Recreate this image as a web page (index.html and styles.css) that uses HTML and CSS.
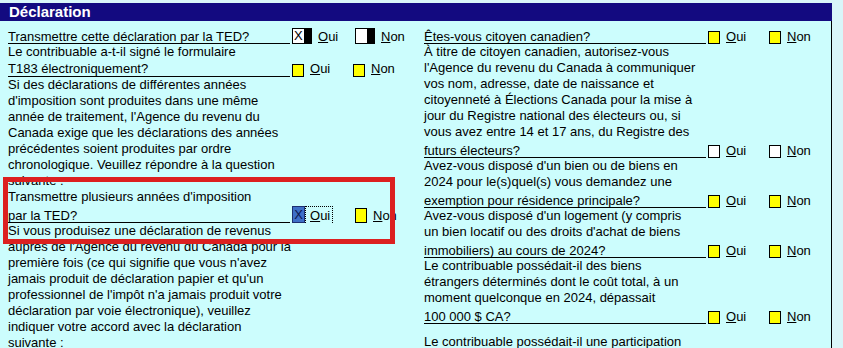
FILE: index.html
```html
<!DOCTYPE html>
<html lang="fr">
<head>
<meta charset="utf-8">
<title>Déclaration</title>
<link rel="stylesheet" href="styles.css">
</head>
<body>
<div class="window">
  <div class="title">Déclaration</div>
  <div class="panel">
    <div class="col">
      <div class="q">
        <div class="q-row">
          <span class="q-text">Transmettre cette déclaration par la TED?</span>
          <span class="opt"><span class="box box-sys">X</span><span class="lbl"><u>O</u>ui</span></span>
          <span class="opt"><span class="box box-sys box-shift"></span><span class="lbl"><u>N</u>on</span></span>
        </div>
      </div>
      <div class="q">
        <div class="q-lead">Le contribuable a-t-il signé le formulaire</div>
        <div class="q-row q-row-short">
          <span class="q-text">T183 électroniquement?</span>
          <span class="opt"><span class="box box-yellow"></span><span class="lbl"><u>O</u>ui</span></span>
          <span class="opt"><span class="box box-yellow"></span><span class="lbl"><u>N</u>on</span></span>
        </div>
      </div>
      <div class="note">Si des déclarations de différentes années<br>d'imposition sont produites dans une même<br>année de traitement, l'Agence du revenu du<br>Canada exige que les déclarations des années<br>précédentes soient produites par ordre<br>chronologique. Veuillez répondre à la question<br>suivante :</div>
      <div class="q">
        <div class="q-lead">Transmettre plusieurs années d'imposition</div>
        <div class="q-row">
          <span class="q-text">par la TED?</span>
          <span class="opt"><span class="box box-checked">X</span><span class="lbl lbl-focus"><u>O</u>ui</span></span>
          <span class="opt"><span class="box box-yellow box-tall box-shift"></span><span class="lbl"><u>N</u>on</span></span>
        </div>
      </div>
      <div class="note">Si vous produisez une déclaration de revenus<br>auprès de l'Agence du revenu du Canada pour la<br>première fois (ce qui signifie que vous n'avez<br>jamais produit de déclaration papier et qu'un<br>professionnel de l'impôt n'a jamais produit votre<br>déclaration par voie électronique), veuillez<br>indiquer votre accord avec la déclaration<br>suivante :</div>
    </div>
    <div class="col">
      <div class="q">
        <div class="q-row">
          <span class="q-text">Êtes-vous citoyen canadien?</span>
          <span class="opt"><span class="box box-yellow"></span><span class="lbl"><u>O</u>ui</span></span>
          <span class="opt"><span class="box box-yellow"></span><span class="lbl"><u>N</u>on</span></span>
        </div>
      </div>
      <div class="q">
        <div class="q-lead">À titre de citoyen canadien, autorisez-vous<br>l'Agence du revenu du Canada à communiquer<br>vos nom, adresse, date de naissance et<br>citoyenneté à Élections Canada pour la mise à<br>jour du Registre national des électeurs ou, si<br>vous avez entre 14 et 17 ans, du Registre des</div>
        <div class="q-row">
          <span class="q-text">futurs électeurs?</span>
          <span class="opt"><span class="box box-white"></span><span class="lbl"><u>O</u>ui</span></span>
          <span class="opt"><span class="box box-white"></span><span class="lbl"><u>N</u>on</span></span>
        </div>
      </div>
      <div class="q">
        <div class="q-lead">Avez-vous disposé d'un bien ou de biens en<br>2024 pour le(s)quel(s) vous demandez une</div>
        <div class="q-row">
          <span class="q-text">exemption pour résidence principale?</span>
          <span class="opt"><span class="box box-yellow"></span><span class="lbl"><u>O</u>ui</span></span>
          <span class="opt"><span class="box box-yellow"></span><span class="lbl"><u>N</u>on</span></span>
        </div>
      </div>
      <div class="q">
        <div class="q-lead">Avez-vous disposé d'un logement (y compris<br>un bien locatif ou des droits d'achat de biens</div>
        <div class="q-row">
          <span class="q-text">immobiliers) au cours de 2024?</span>
          <span class="opt"><span class="box box-yellow"></span><span class="lbl"><u>O</u>ui</span></span>
          <span class="opt"><span class="box box-yellow"></span><span class="lbl"><u>N</u>on</span></span>
        </div>
      </div>
      <div class="q">
        <div class="q-lead">Le contribuable possédait-il des biens<br>étrangers déterminés dont le coût total, à un<br>moment quelconque en 2024, dépassait</div>
        <div class="q-row">
          <span class="q-text">100 000 $ CA?</span>
          <span class="opt"><span class="box box-yellow"></span><span class="lbl"><u>O</u>ui</span></span>
          <span class="opt"><span class="box box-yellow"></span><span class="lbl"><u>N</u>on</span></span>
        </div>
      </div>
      <div class="q q-spaced">
        <div class="q-lead">Le contribuable possédait-il une participation</div>
      </div>
    </div>
  </div>
</div>
<div class="callout"></div>
</body>
</html>
```
FILE: styles.css
```css
html, body {
  margin: 0;
  padding: 0;
}
body {
  background: #d9f6f9;
  font-family: "Liberation Sans", Arial, sans-serif;
  font-size: 13px;
  color: #000;
  width: 843px;
  height: 348px;
  overflow: hidden;
  position: relative;
}
.window {
  margin-top: 3px;
  width: 832px;
}
.title {
  height: 18px;
  line-height: 18px;
  background: #130a80;
  color: #fff;
  font-weight: bold;
  font-size: 15px;
  padding-left: 9px;
}
.panel {
  background: #ccfdfd;
  border-right: 1px solid #000;
  height: 330px;
  box-sizing: border-box;
  padding: 5px 0 0 8px;
  display: grid;
  grid-template-columns: 416px 1fr;
  overflow: hidden;
}
.col {
  display: flex;
  flex-direction: column;
  white-space: nowrap;
}
.q-lead, .note {
  line-height: 16px;
}
.q-row {
  display: flex;
  align-items: flex-end;
  height: 18px;
}
.q-row-short {
  height: 17px;
}
.q-text {
  box-sizing: border-box;
  width: 282px;
  height: 100%;
  margin-right: 2px;
  padding-top: 3px;
  line-height: 16px;
  background-image: linear-gradient(#000, #000);
  background-size: 100% 1px;
  background-position: left bottom;
  background-repeat: no-repeat;
}
.q-row-short .q-text {
  padding-top: 1px;
}
.opt {
  display: flex;
  align-items: flex-end;
  width: 61px;
  height: 100%;
}
.box {
  box-sizing: border-box;
  width: 12px;
  height: 13px;
  border: 1px solid #000;
  flex: none;
}
.box-yellow {
  background: #ffff00;
}
.box-white {
  background: #fff;
}
.box-tall {
  height: 15px;
}
.box-shift {
  margin-left: 2px;
}
.box-sys {
  width: 20px;
  height: 16px;
  background: linear-gradient(to right, #fff 0 11px, #000 11px);
  font-size: 13px;
  line-height: 14px;
  padding-left: 1px;
}
.box-checked {
  width: 13px;
  height: 17px;
  background: #3d6fc8;
  border-color: #1d2f70;
  color: #0c1850;
  font-size: 13px;
  line-height: 16px;
  text-align: center;
}
.lbl {
  box-sizing: border-box;
  height: 18px;
  padding-top: 3px;
  line-height: 16px;
  margin-left: 6px;
}
.q-row-short .lbl {
  height: 17px;
  padding-top: 1px;
}
.lbl-focus {
  margin-left: 0;
  padding-left: 4px;
  padding-right: 2px;
  padding-top: 1px;
  height: 17px;
  border: 1px dotted #000;
  border-bottom: none;
}
.q-spaced {
  margin-top: 10px;
}
.callout {
  position: absolute;
  left: 3px;
  top: 177px;
  width: 392px;
  height: 67px;
  box-sizing: border-box;
  border: 5px solid #dc2020;
}
```
